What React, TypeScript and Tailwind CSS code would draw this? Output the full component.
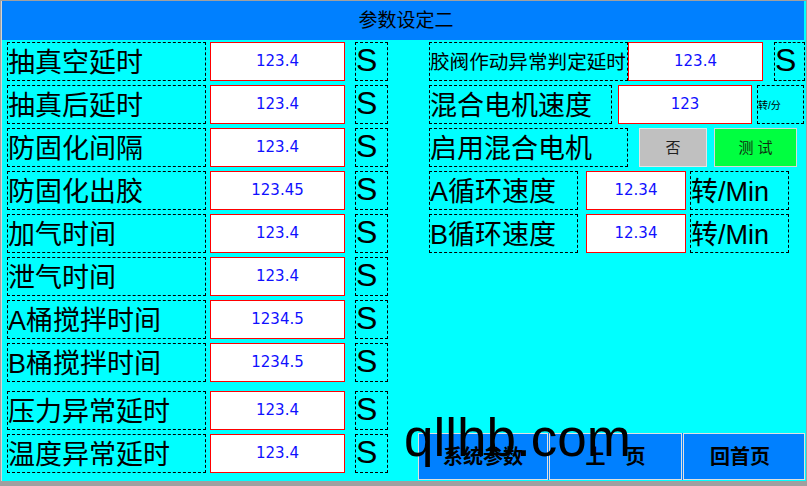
import React from "react";

const CJK = "font-['Liberation_Sans','Noto_Sans_CJK_SC',sans-serif]";

type LeftRow = { label: string; value: string; gapTop?: boolean };

const leftRows: LeftRow[] = [
  { label: "抽真空延时", value: "123.4" },
  { label: "抽真后延时", value: "123.4" },
  { label: "防固化间隔", value: "123.4" },
  { label: "防固化出胶", value: "123.45" },
  { label: "加气时间", value: "123.4" },
  { label: "泄气时间", value: "123.4" },
  { label: "A桶搅拌时间", value: "1234.5" },
  { label: "B桶搅拌时间", value: "1234.5" },
  { label: "压力异常延时", value: "123.4", gapTop: true },
  { label: "温度异常延时", value: "123.4" },
];

function Label({ text, className = "" }: { text: string; className?: string }) {
  return (
    <div
      className={`h-[39px] flex items-center pt-[3px] border border-dashed border-black leading-none text-black whitespace-nowrap overflow-hidden ${CJK} ${className}`}
    >
      {text}
    </div>
  );
}

function Value({ text, className = "" }: { text: string; className?: string }) {
  return (
    <div
      className={`h-[39px] flex items-center justify-center bg-white border border-[#ff0000] text-[15px] leading-none text-[#1010ff] font-['DejaVu_Sans',sans-serif] ${className}`}
    >
      {text}
    </div>
  );
}

function Unit({ text, className = "" }: { text: string; className?: string }) {
  return (
    <div
      className={`h-[39px] flex items-center border border-dashed border-black leading-none text-black whitespace-nowrap overflow-hidden ${CJK} ${className}`}
    >
      {text}
    </div>
  );
}

export default function App() {
  return (
    <div className="w-[807px] h-[486px] bg-[#a0a0a0] pt-px pl-px pr-px pb-[5px]">
      <div className="relative h-full flex flex-col bg-[#00ffff] border-l border-[#d4d4d4]">
        {/* title bar */}
        <div className="h-[39px] mr-[2px] bg-[#0080ff] flex items-center justify-center">
          <span className={`text-[19px] leading-none text-black pl-[6px] ${CJK}`}>参数设定二</span>
        </div>

        <div className="flex-1 flex pt-[2px]">
          {/* left column */}
          <div className="ml-[5px] flex flex-col gap-[4px]">
            {leftRows.map((r, i) => (
              <div key={i} className={`flex ${r.gapTop ? "mt-[5px]" : ""}`}>
                <Label text={r.label} className="w-[199px] text-[27px]" />
                <Value text={r.value} className="w-[135px] ml-[4px]" />
                <Unit text="S" className="w-[33px] ml-[10px] text-[32px] pb-[3px]" />
              </div>
            ))}
          </div>

          {/* right column */}
          <div className="ml-[30px] flex-1 flex flex-col pr-[2px]">
            <div className="pl-[11px] flex flex-col gap-[4px]">
              <div className="flex">
                <Label text="胶阀作动异常判定延时" className="w-[199px] text-[19.6px]" />
                <Value text="123.4" className="w-[135px]" />
                <Unit text="S" className="w-[31px] ml-[11px] text-[32px] pb-[3px]" />
              </div>
              <div className="flex">
                <Label text="混合电机速度" className="w-[183px] text-[27px]" />
                <Value text="123" className="w-[134px] ml-[6px]" />
                <Unit text="转/分" className="w-[47px] ml-[5px] text-[10px] pt-[2px]" />
              </div>
              <div className="flex">
                <Label text="启用混合电机" className="w-[199px] text-[27px]" />
                <button className={`w-[68px] h-[39px] ml-[11px] bg-[#c0c0c0] border border-[#e4e4e4] text-[15px] leading-none text-[#202020] ${CJK}`}>
                  否
                </button>
                <button className={`w-[83px] h-[39px] ml-[7px] bg-[#00ff40] border border-[#d8d8d8] text-[15px] leading-none text-[#103010] ${CJK}`}>
                  测 试
                </button>
              </div>
              <div className="flex">
                <Label text="A循环速度" className="w-[149px] text-[27px]" />
                <Value text="12.34" className="w-[100px] ml-[8px]" />
                <Unit text="转/Min" className="w-[99px] ml-[4px] text-[27px] pt-[3px]" />
              </div>
              <div className="flex">
                <Label text="B循环速度" className="w-[149px] text-[27px]" />
                <Value text="12.34" className="w-[100px] ml-[8px]" />
                <Unit text="转/Min" className="w-[99px] ml-[4px] text-[27px] pt-[3px]" />
              </div>
            </div>

            {/* bottom navigation */}
            <div className="mt-auto mb-px h-[47px] flex gap-px bg-[#0080ff]">
              <button className={`w-[130px] h-full bg-[#0080ff] border border-[#e0e0e0] text-[20px] font-bold leading-none text-black ${CJK}`}>
                系统参数
              </button>
              <button className={`w-[133px] h-full bg-[#0080ff] border border-[#e0e0e0] text-[20px] font-bold leading-none text-black ${CJK}`}>
                上　页
              </button>
              <button className={`flex-1 h-full bg-[#0080ff] border border-[#e0e0e0] text-[20px] font-bold leading-none text-black pr-[8px] ${CJK}`}>
                回首页
              </button>
            </div>
          </div>
        </div>

        {/* watermark */}
        <div className="absolute left-[402px] top-[410px] text-[53px] leading-none text-black font-['Liberation_Sans',sans-serif] pointer-events-none">
          qllhb.com
        </div>
      </div>
    </div>
  );
}
